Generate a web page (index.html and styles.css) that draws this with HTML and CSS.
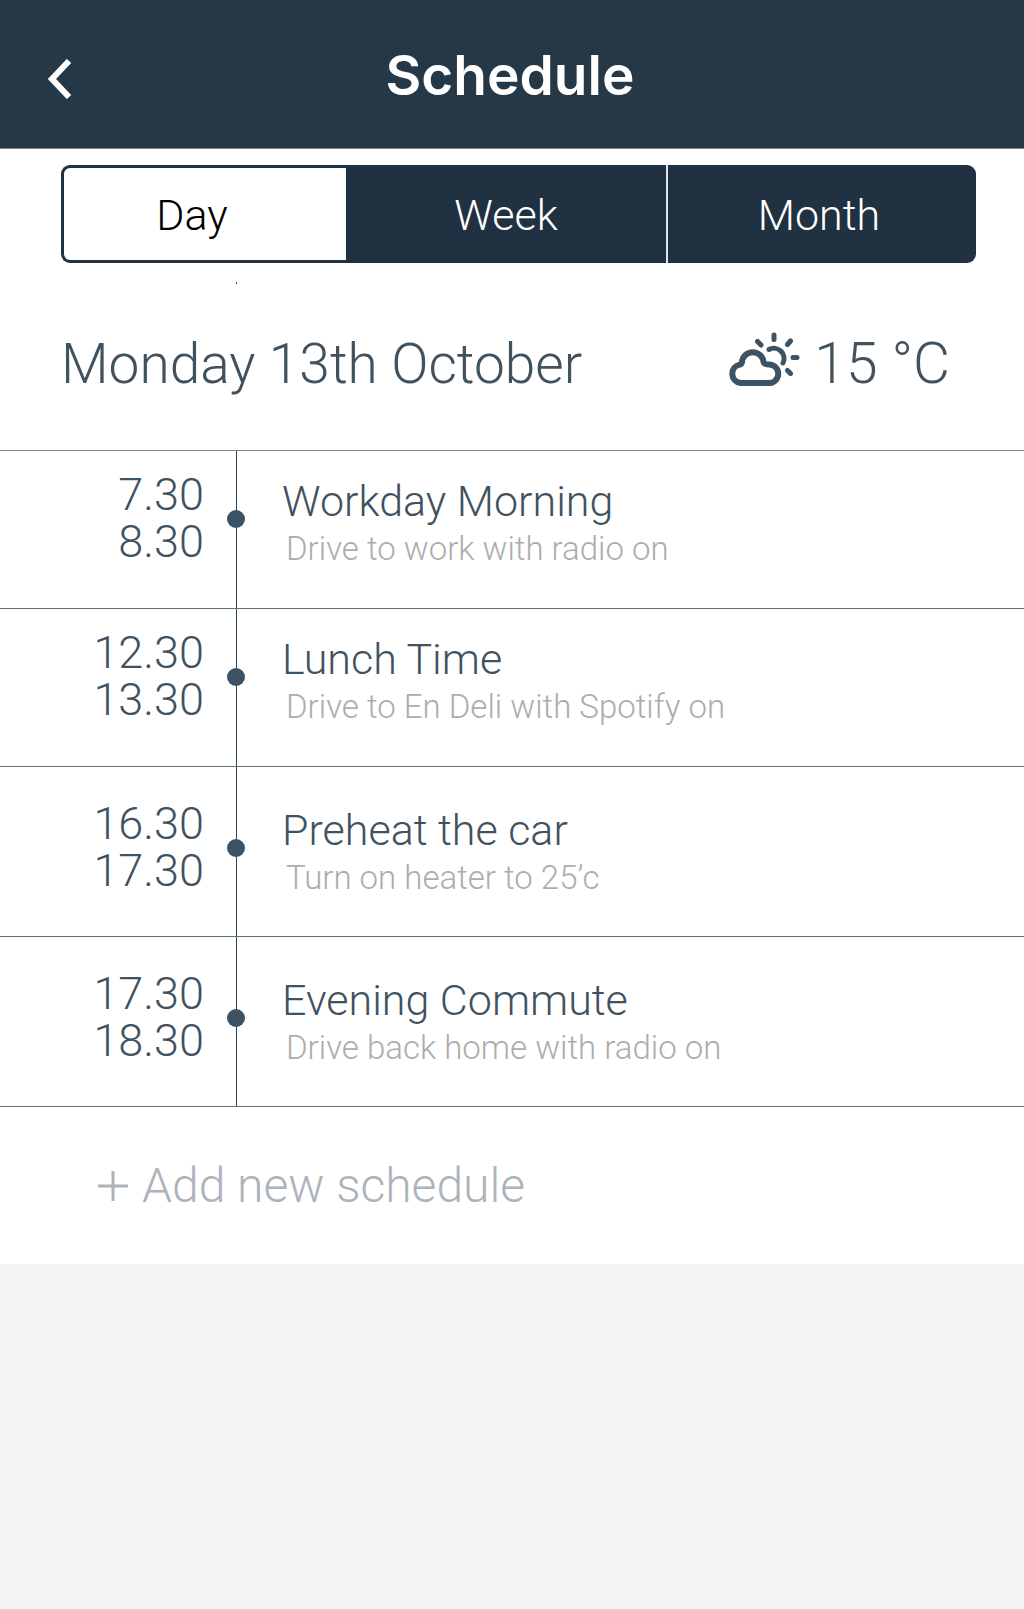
FILE: index.html
```html
<!DOCTYPE html>
<html lang="en">
<head>
<meta charset="utf-8">
<meta name="viewport" content="width=device-width, initial-scale=1">
<title>Schedule</title>
<link rel="stylesheet" href="styles.css">
</head>
<body>
<header class="topbar">
  <button class="back" type="button" aria-label="Back">
    <svg width="24" height="40" viewBox="0 0 24 40" fill="none" stroke="currentColor" stroke-width="6"><path d="M21 2 4 20l17 18"/></svg>
  </button>
  <h1 class="topbar-title">Schedule</h1>
</header>
<main class="page">
  <nav class="range" aria-label="Range">
    <button class="range-item range-item--active" type="button">Day</button>
    <button class="range-item range-item--week" type="button">Week</button>
    <button class="range-item range-item--month" type="button">Month</button>
  </nav>
  <div class="tick"></div>
  <section class="summary">
    <h2 class="date">Monday 13th October</h2>
    <div class="weather">
      <svg class="weather-icon" width="72" height="56" viewBox="0 0 72 56" fill="none" stroke="currentColor" stroke-linecap="round" stroke-linejoin="round">
        <path stroke-width="6" d="M12.500 51h28.500a9.300 9.300 0 0 0 0-18.600c-3 0-5-.4-5.500-2.400a10.800 10.800 0 0 0-21.500 0c-.2 1.800-1 2.500-2.500 2.700a9.300 9.300 0 0 0 1 18.300z"/>
        <path stroke-width="5" d="M41 17.500a10.200 10.200 0 0 1 14 13.500"/>
        <path stroke-width="5" d="M46 3v4.500M62.500 9l-3 3.500M69 25.500h-4M62.500 41.500l-3-3M29.500 9.500l3.500 3.500"/>
      </svg>
      <span class="temp">15 °C</span>
    </div>
  </section>
  <ol class="events">
    <li class="event">
      <div class="times"><time>7.30</time><time>8.30</time></div>
      <span class="dot"></span>
      <div class="details"><h3 class="title">Workday Morning</h3><p class="note">Drive to work with radio on</p></div>
    </li>
    <li class="event">
      <div class="times"><time>12.30</time><time>13.30</time></div>
      <span class="dot"></span>
      <div class="details"><h3 class="title">Lunch Time</h3><p class="note">Drive to En Deli with Spotify on</p></div>
    </li>
    <li class="event event--late">
      <div class="times"><time>16.30</time><time>17.30</time></div>
      <span class="dot"></span>
      <div class="details"><h3 class="title">Preheat the car</h3><p class="note">Turn on heater to 25’c</p></div>
    </li>
    <li class="event event--late">
      <div class="times"><time>17.30</time><time>18.30</time></div>
      <span class="dot"></span>
      <div class="details"><h3 class="title">Evening Commute</h3><p class="note">Drive back home with radio on</p></div>
    </li>
  </ol>
  <button class="add" type="button">
    <svg width="30" height="30" viewBox="0 0 30 30" stroke="currentColor" stroke-width="3"><path d="M15 0v30M0 15h30"/></svg>
    Add new schedule
  </button>
</main>
</body>
</html>
```

FILE: styles.css
```css
* { box-sizing: border-box; }

body {
  margin: 0;
  background-color: #f3f3f3;
  color: #41525f;
  font-family: Roboto, "Liberation Sans", sans-serif;
  font-weight: 300;
}

h1, h2, h3, p, ol { margin: 0; padding: 0; font-weight: inherit; }

button {
  border: 0;
  background: none;
  font: inherit;
  cursor: pointer;
}

.topbar {
  display: grid;
  grid-template-columns: 120px 1fr 124px;
  align-items: center;
  height: 149px;
  padding-top: 2px;
  background: #253848;
  border-bottom: 1px solid #7c8890;
  color: #fff;
}

.back {
  justify-self: start;
  display: flex;
  margin: 8px 0 0 48px;
  padding: 0;
  color: #fff;
}

.topbar-title {
  text-align: center;
  font-family: Inter, "Liberation Sans", sans-serif;
  font-size: 55px;
  line-height: 64px;
  font-weight: 600;
}

.page { background: #fff; }

.range {
  display: grid;
  grid-template-columns: 285fr 320fr 310fr;
  margin: 0 48px 0 61px;
  padding-top: 16px;
}

.range-item {
  height: 98px;
  padding-top: 3px;
  background: #203141;
  color: #fff;
  font-size: 43px;
}

.range-item--active {
  padding-right: 32px;
  border: 3px solid #203141;
  border-right: 0;
  border-radius: 9px 0 0 9px;
  background: #fff;
  color: #000;
}

.range-item--month {
  padding-right: 12px;
  border-left: 2px solid #dfe3e6;
  border-radius: 0 9px 9px 0;
}

.tick {
  width: 1px;
  height: 2px;
  margin: 19px 0 0 236px;
  background: #41525f;
}

.summary {
  display: flex;
  justify-content: space-between;
  align-items: center;
  height: 166px;
  padding: 0 74px 6px 61px;
}

.date, .temp { line-height: 64px; }

.date { font-size: 55px; }

.temp { font-size: 57px; }

.weather { display: flex; align-items: flex-start; gap: 14px; }

.weather-icon { color: #3b5364; }

.events {
  list-style: none;
  border-top: 1px solid #7f8a90;
  background: linear-gradient(#2f4656, #2f4656) 236px 0 / 1px 100% no-repeat;
}

.event {
  display: grid;
  grid-template-columns: 204px 18px 1fr;
  column-gap: 23px;
  height: 158px;
  padding-top: 20px;
  border-bottom: 1px solid #5f6f78;
}

.event--late { height: 170px; padding-top: 33px; }

.times {
  display: flex;
  flex-direction: column;
  text-align: right;
  color: #3f5261;
  font-size: 45px;
  line-height: 47px;
}

.dot {
  width: 18px;
  height: 18px;
  margin-top: 39px;
  border-radius: 50%;
  background: #3b5364;
}

.details { padding: 6px 0 0 14px; }

.title { font-size: 43px; line-height: 48px; }

.note { padding-left: 4px; color: #adadad; font-size: 33px; line-height: 48px; }

.add {
  display: flex;
  align-items: center;
  gap: 14px;
  width: 100%;
  height: 157px;
  padding: 0 98px;
  color: #adb3ba;
  font-size: 48px;
}
```
